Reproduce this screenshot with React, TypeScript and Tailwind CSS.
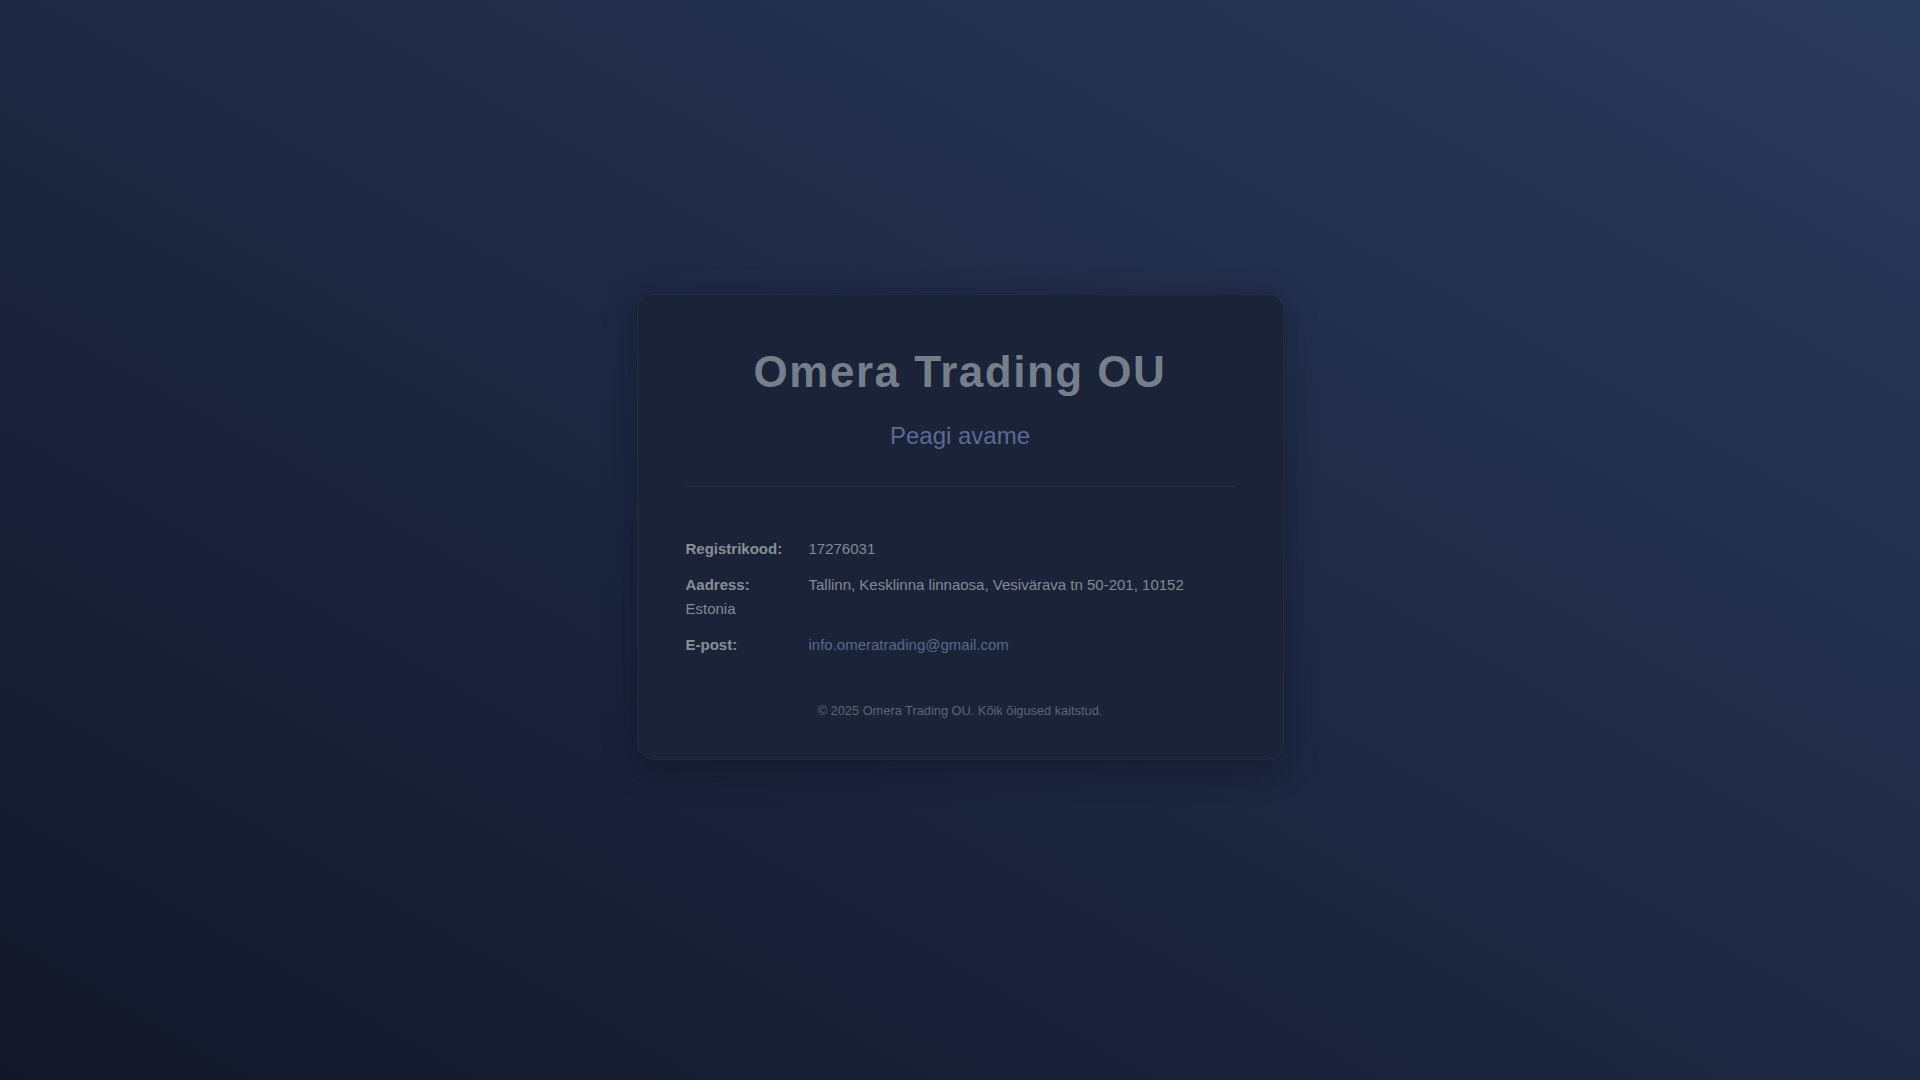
export default function App() {
  return (
    <div
      className="min-h-screen w-full flex items-center justify-center bg-[linear-gradient(to_top_right,#111728_0%,#1d2842_50%,#2a3a5c_100%)]"
      style={{ fontFamily: '"Liberation Sans", Arial, sans-serif' }}
    >
      <div className="w-[647px] rounded-2xl bg-[#1a2337] border border-[#212b41] shadow-[0_8px_32px_rgba(8,12,24,0.35)] px-12 pt-[50px] pb-[38px] -mt-[27px]">
        <div className="text-center border-b border-[#2a3449] pb-[36px]">
          <h1 className="text-[44px] leading-[53px] font-bold tracking-[1.5px] text-[#767d8b]">Omera Trading OU</h1>
          <p className="mt-[23px] text-[24px] leading-[29px] text-[#5b6b96]">Peagi avame</p>
        </div>

        <div className="mt-[50px] text-[15px] leading-[24px] text-[#84899500]">
          <p className="mb-3 text-[#848995]">
            <span className="inline-block w-[123px] font-bold text-[#8a8e99]">Registrikood:</span>
            17276031
          </p>
          <p className="mb-3 text-[#848995]">
            <span className="inline-block w-[123px] font-bold text-[#8a8e99]">Aadress:</span>
            Tallinn, Kesklinna linnaosa, Vesivärava tn 50-201, 10152 Estonia
          </p>
          <p className="mb-3 text-[#848995]">
            <span className="inline-block w-[123px] font-bold text-[#8a8e99]">E-post:</span>
            <a className="text-[#58688f]">info.omeratrading@gmail.com</a>
          </p>
        </div>

        <p className="mt-[44px] text-center text-[12.8px] leading-[20px] text-[#5f6573]">
          © 2025 Omera Trading OU. Kõik õigused kaitstud.
        </p>
      </div>
    </div>
  )
}
